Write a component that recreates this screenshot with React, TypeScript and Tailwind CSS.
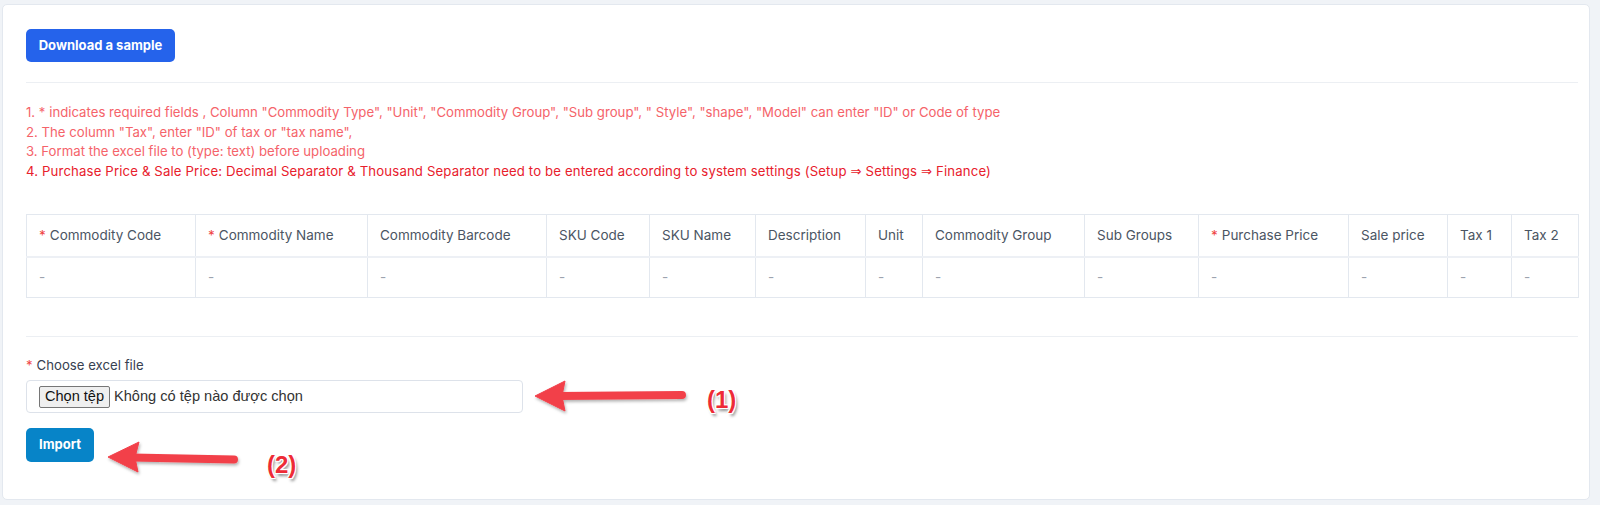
import React from 'react';

const columns = [
  { label: 'Commodity Code', required: true, w: 'w-[169px]' },
  { label: 'Commodity Name', required: true, w: 'w-[172px]' },
  { label: 'Commodity Barcode', required: false, w: 'w-[179px]' },
  { label: 'SKU Code', required: false, w: 'w-[103px]' },
  { label: 'SKU Name', required: false, w: 'w-[106px]' },
  { label: 'Description', required: false, w: 'w-[110px]' },
  { label: 'Unit', required: false, w: 'w-[57px]' },
  { label: 'Commodity Group', required: false, w: 'w-[162px]' },
  { label: 'Sub Groups', required: false, w: 'w-[114px]' },
  { label: 'Purchase Price', required: true, w: 'w-[150px]' },
  { label: 'Sale price', required: false, w: 'w-[99px]' },
  { label: 'Tax 1', required: false, w: 'w-[64px]' },
  { label: 'Tax 2', required: false, w: 'w-[67px]' },
];

function Annotations() {
  return (
    <svg className="absolute inset-0 pointer-events-none" width="1600" height="505" viewBox="0 0 1600 505">
      <defs>
        <filter id="shadow" x="-20%" y="-50%" width="140%" height="200%">
          <feDropShadow dx="1" dy="2" stdDeviation="1.5" floodColor="#000" floodOpacity="0.3" />
        </filter>
      </defs>
      <g fill="#f2404a" stroke="#f2404a" filter="url(#shadow)">
        <line x1="682" y1="395" x2="558" y2="396" strokeWidth="8" strokeLinecap="round" />
        <path d="M535 396 L565 381 L562 396 L565 411 Z" strokeWidth="1" strokeLinejoin="round" />
        <line x1="234" y1="459.5" x2="132" y2="457.5" strokeWidth="8" strokeLinecap="round" />
        <path d="M108 457 L139 442 L135 457.5 L138 472 Z" strokeWidth="1" strokeLinejoin="round" />
      </g>
    </svg>
  );
}

function Badge({ text, className }: { text: string; className: string }) {
  return (
    <span
      className={`absolute text-[24px] font-bold leading-none text-[#ee2b36] [font-family:'Liberation_Sans',Arial,sans-serif] [text-shadow:0_0_1px_#fff,0_0_2px_#fff,1px_1px_0_#fff,-1px_-1px_0_#fff,1px_-1px_0_#fff,-1px_1px_0_#fff,2px_3px_3px_rgba(0,0,0,0.45)] ${className}`}
    >
      {text}
    </span>
  );
}

const Arrow = () => <span className="[font-family:'DejaVu_Sans',sans-serif]">⇒</span>;

export default function App() {
  return (
    <div className="relative w-[1600px] h-[505px] bg-[#f0f3f7] pt-[4px] pl-[2px] [font-family:Inter,'Noto_Sans',sans-serif]">
      <div className="w-[1588px] h-[496px] bg-white border border-[#e3e8ef] rounded-[5px] pl-[23px] pr-[11px] pt-[24px]">
        <button className="h-[33px] w-[149px] rounded-[5px] bg-[#2563eb] text-white text-[13px] font-bold">
          Download a sample
        </button>

        <div className="mt-[20px] border-t border-[#eceff3]" />

        <div className="mt-[20px] text-[13.2px] leading-[19.5px] text-[#f5636a]">
          <p>1. * indicates required fields , Column "Commodity Type", "Unit", "Commodity Group", "Sub group", " Style", "shape", "Model" can enter "ID" or Code of type</p>
          <p>2. The column "Tax", enter "ID" of tax or "tax name",</p>
          <p>3. Format the excel file to (type: text) before uploading</p>
          <p className="text-[#e8202c] tracking-[0.14px]">
            4. Purchase Price &amp; Sale Price: Decimal Separator &amp; Thousand Separator need to be entered according to system settings (Setup <Arrow /> Settings <Arrow /> Finance)
          </p>
        </div>

        <table className="mt-[33px] w-[1552px] table-fixed border-collapse text-[13.5px]">
          <colgroup>
            {columns.map(c => (
              <col key={c.label} className={c.w} />
            ))}
          </colgroup>
          <thead>
            <tr className="h-[42px]">
              {columns.map(c => (
                <th
                  key={c.label}
                  className="border border-[#e3e8ef] border-b-2 border-b-[#edf0f5] px-3 text-left font-normal text-[#4b5563] whitespace-nowrap"
                >
                  {c.required && <span className="text-[#ef4444] mr-1">*</span>}
                  {c.label}
                </th>
              ))}
            </tr>
          </thead>
          <tbody>
            <tr className="h-[41px]">
              {columns.map(c => (
                <td key={c.label} className="border border-[#e3e8ef] px-3 text-[#9ca3af]">
                  -
                </td>
              ))}
            </tr>
          </tbody>
        </table>

        <div className="mt-[38px] border-t border-[#eceff3]" />

        <div className="mt-[18px] text-[13.2px] leading-[20px] text-[#374151]">
          <span className="text-[#ef4444] mr-1">*</span>Choose excel file
        </div>

        <div className="mt-[5px] flex h-[33px] w-[497px] items-center rounded-[4px] border border-[#dde2ea] pl-[12px] [font-family:'Liberation_Sans',Arial,sans-serif] text-[14.6px]">
          <span className="flex h-[22px] w-[71px] items-center justify-center rounded-[2px] border border-[#767676] bg-[#efefef] text-[#111]">
            Chọn tệp
          </span>
          <span className="ml-[4px] text-[#333]">Không có tệp nào được chọn</span>
        </div>

        <button className="mt-[15px] h-[34px] w-[68px] rounded-[5px] bg-[#0784c8] text-white text-[13px] font-bold">
          Import
        </button>
      </div>

      <Annotations />
      <Badge text="(1)" className="left-[707px] top-[388px]" />
      <Badge text="(2)" className="left-[267px] top-[453px]" />
    </div>
  );
}
